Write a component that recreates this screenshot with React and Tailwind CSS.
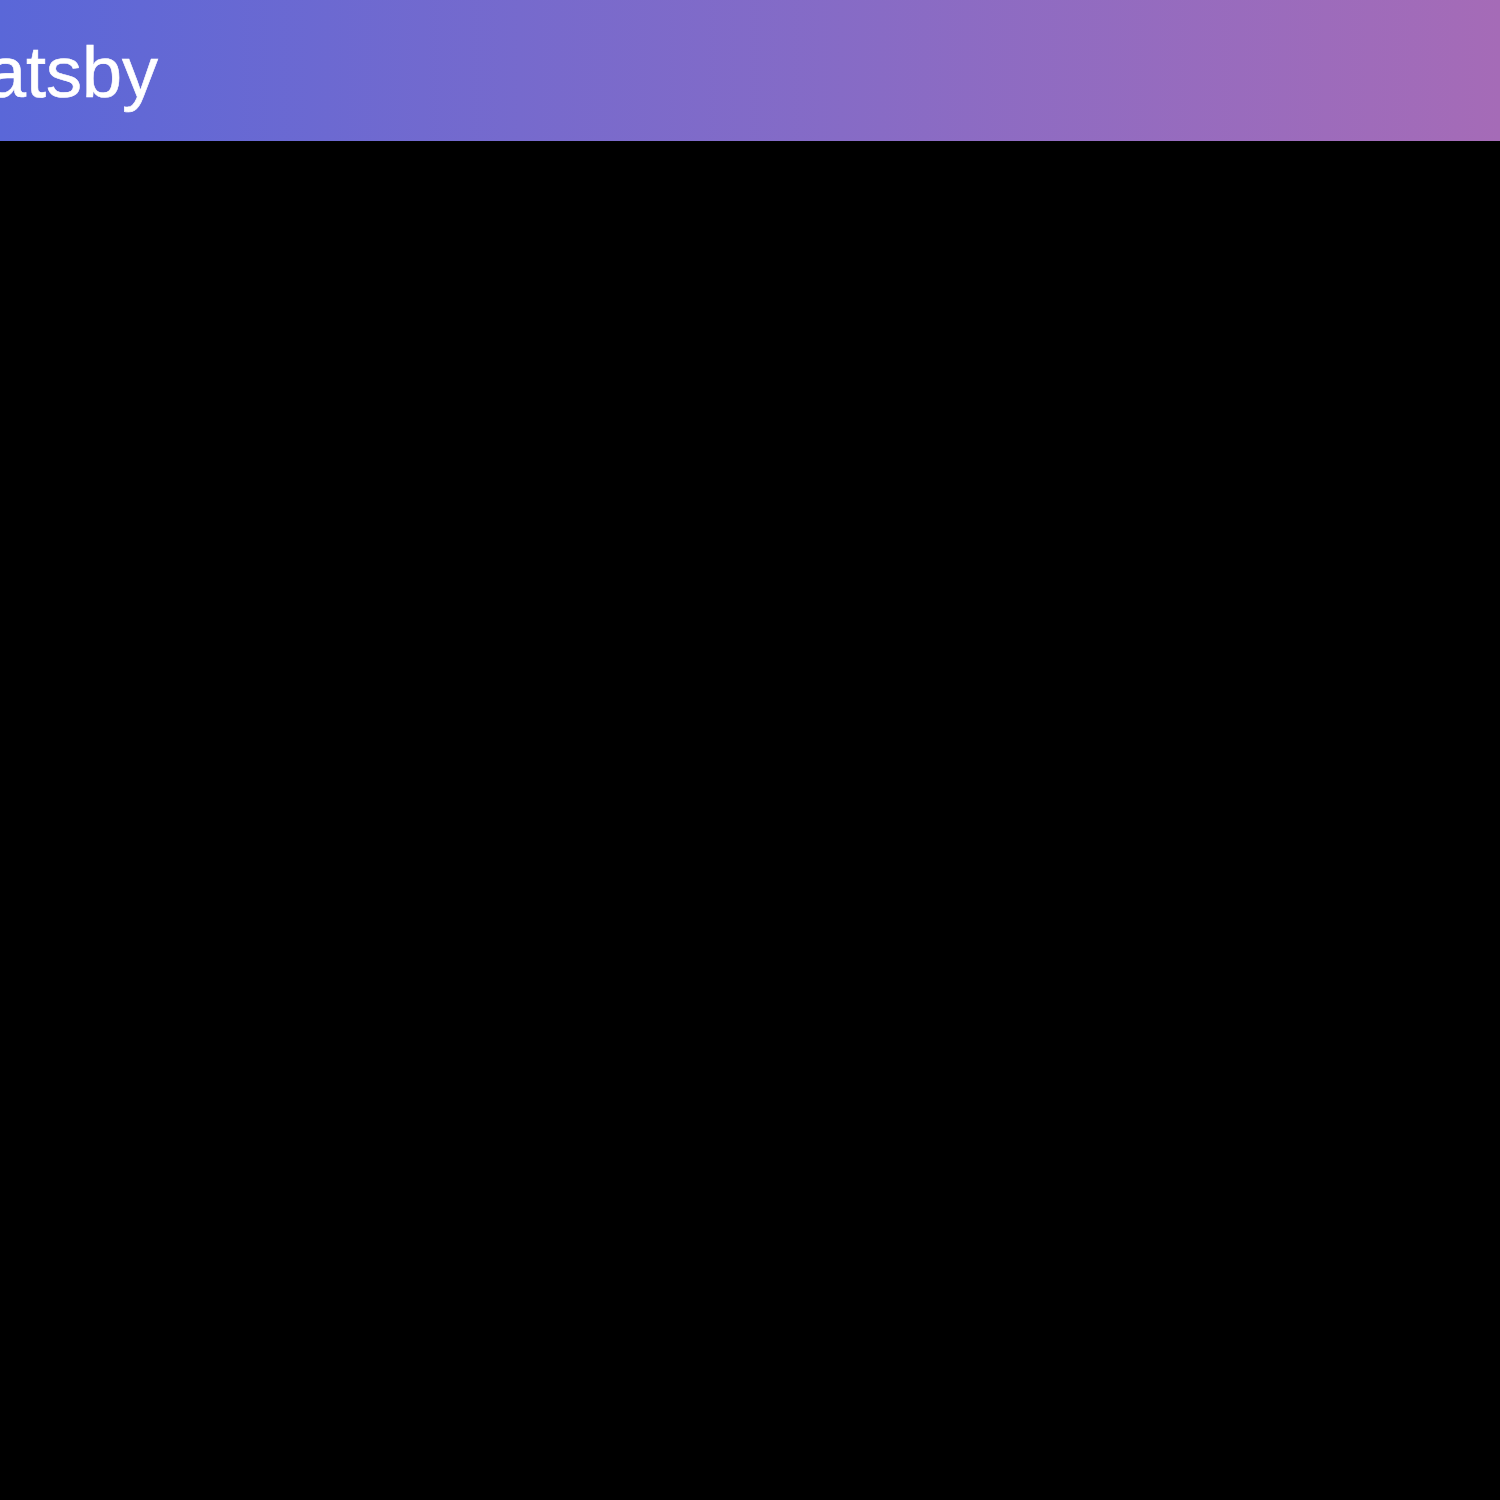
export default function App() {
  return (
    <div className="min-h-[1500px] w-full bg-black">
      <header className="h-[141px] w-full bg-gradient-to-r from-[#5a67d8] to-[#a56bb7] overflow-hidden">
        <div className="pt-[36px] -ml-[70px]">
          <h1
            className="text-[72px] leading-none text-white whitespace-nowrap [-webkit-text-stroke:0.6px_white]"
            style={{ fontFamily: '"Liberation Sans", Arial, sans-serif' }}
          >
            Gatsby
          </h1>
        </div>
      </header>
    </div>
  );
}
